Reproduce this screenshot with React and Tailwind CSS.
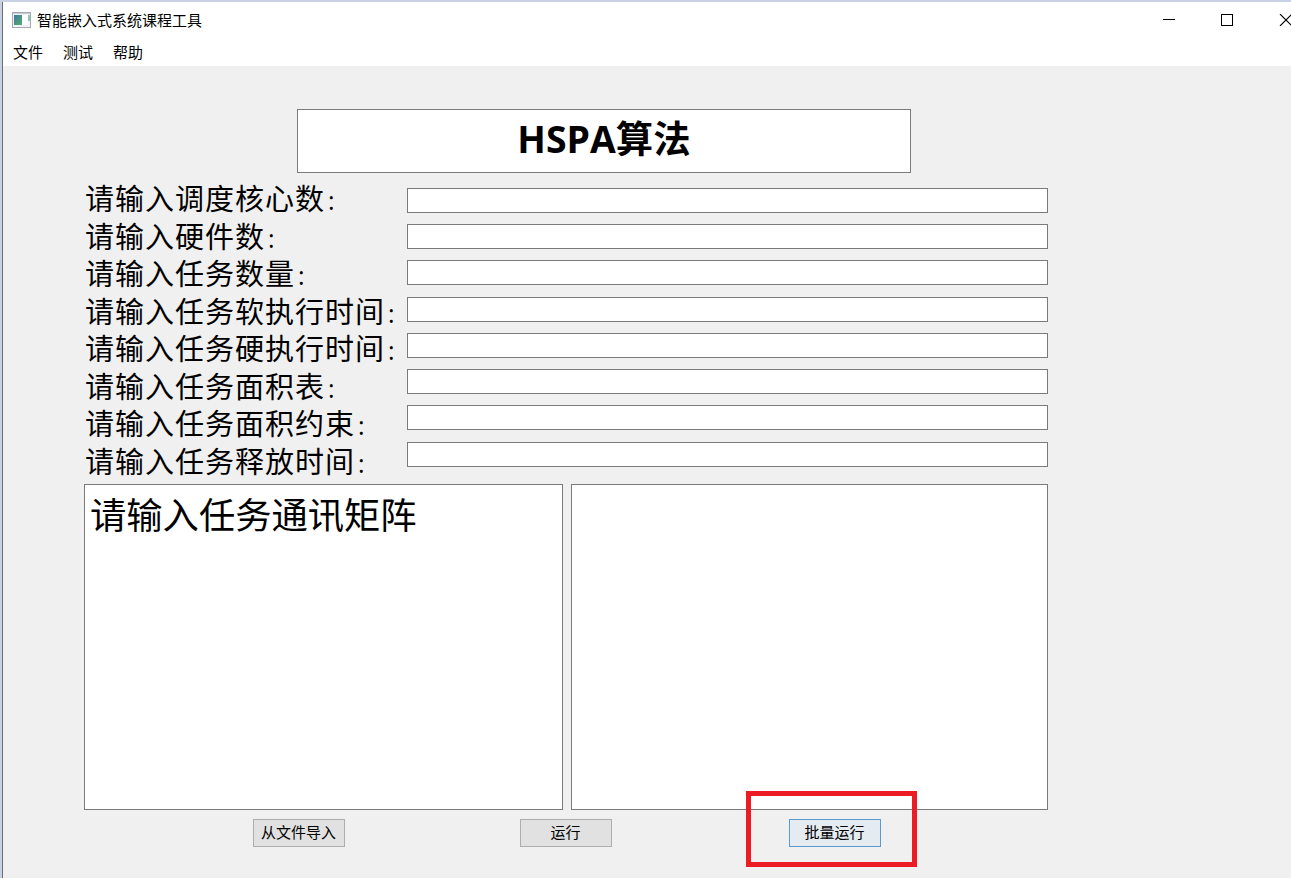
const FIELDS = [
  { label: "请输入调度核心数", gap: "mt-0" },
  { label: "请输入硬件数", gap: "mt-[11px]" },
  { label: "请输入任务数量", gap: "mt-[11px]" },
  { label: "请输入任务软执行时间", gap: "mt-[12px]" },
  { label: "请输入任务硬执行时间", gap: "mt-[11px]" },
  { label: "请输入任务面积表", gap: "mt-[11px]" },
  { label: "请输入任务面积约束", gap: "mt-[11px]" },
  { label: "请输入任务释放时间", gap: "mt-[12px]" },
];

function AppIcon() {
  return (
    <svg width="20" height="16" viewBox="0 0 20 16" className="shrink-0">
      <defs>
        <linearGradient id="pane" x1="0" y1="0" x2="1" y2="1">
          <stop offset="0" stopColor="#3f78a0" />
          <stop offset="1" stopColor="#55ad70" />
        </linearGradient>
      </defs>
      <rect x="0.5" y="0.5" width="18" height="15" fill="#f1f3f6" stroke="#a4a8b2" />
      <rect x="1" y="1" width="17" height="1" fill="#c6cad3" />
      <rect x="2" y="3" width="8" height="10" fill="url(#pane)" />
      <rect x="10" y="3" width="6" height="10" fill="#ffffff" />
      <rect x="16" y="3" width="2" height="6" fill="#8cc8b0" />
    </svg>
  );
}

function TitleBar() {
  return (
    <header className="flex h-[36px] items-start bg-white">
      <div className="flex pt-[10px] pl-[9px]">
        <AppIcon />
        <h1 className="ml-[5px] text-[15px] leading-[16px] whitespace-nowrap">智能嵌入式系统课程工具</h1>
      </div>
      <div className="ml-auto flex w-[128px] shrink-0 overflow-hidden pt-[12px]">
        <svg width="128" height="12" viewBox="0 0 128 12" shapeRendering="crispEdges">
          <rect x="0" y="5" width="12" height="1" />
          <rect x="58.5" y="0.5" width="11" height="11" fill="none" stroke="#000" />
          <path d="M117 0 l12 12 M129 0 l-12 12" stroke="#000" strokeWidth="1.1" fill="none" shapeRendering="auto" />
        </svg>
      </div>
    </header>
  );
}

function PushButton({ children, className }) {
  return (
    <button className={`h-[28px] w-[92px] border pr-px text-center text-[15px] leading-[24px] ${className}`}>
      <span className="block h-[26px] whitespace-nowrap">{children}</span>
    </button>
  );
}

export default function App() {
  return (
    <div className="h-[878px] w-[1291px] overflow-hidden border-t-2 border-l-2 border-[#c7d1e4] bg-[#f0f0f0] font-['Open_Sans','Noto_Sans_CJK_SC',sans-serif] text-black">
      <div className="h-full border-l border-[#6b6e75]">
        <TitleBar />
        <nav className="flex h-[28px] gap-[20px] bg-white pl-[10px] text-[15px] leading-[28px]">
          <span>文件</span>
          <span>测试</span>
          <span>帮助</span>
        </nav>
        <main className="flex flex-col pt-[43px]">
          <div className="ml-[294px] h-[64px] w-[614px] border border-[#7a7a7a] bg-white text-center text-[37.4px] leading-[57px] font-bold">
            HSPA算法
          </div>
          <section className="mt-[8px] ml-[81px] flex h-[303px]">
            <div className="-mt-px w-[323px] pl-px text-[29px] leading-[37.5px] tracking-[1px] whitespace-nowrap">
              {FIELDS.map((f) => (
                <div key={f.label} className="h-[37.5px]">
                  {f.label}
                  <span className="ml-[3px] text-[25px] leading-none">:</span>
                </div>
              ))}
            </div>
            <div className="flex flex-col pt-[7px]">
              {FIELDS.map((f) => (
                <div key={f.label} className={`h-[25px] w-[641px] border border-[#7a7a7a] bg-white ${f.gap}`} />
              ))}
            </div>
          </section>
          <section className="ml-[81px] flex gap-[8px]">
            <div className="h-[326px] w-[479px] border border-[#7a7a7a] bg-white pl-[5px] text-[36.3px] leading-[60px]">
              请输入任务通讯矩阵
            </div>
            <div className="h-[326px] w-[477px] border border-[#7a7a7a] bg-white" />
          </section>
          <div className="mt-[9px] ml-[250px] flex">
            <PushButton className="border-[#adadad] bg-[#e1e1e1]">从文件导入</PushButton>
            <PushButton className="ml-[175px] border-[#adadad] bg-[#e1e1e1]">运行</PushButton>
            <div className="relative ml-[177px]">
              <PushButton className="border-[#5a9bcf] bg-[#e4ebf1]">批量运行</PushButton>
              <div className="pointer-events-none absolute -top-[28px] -left-[43px] h-[76px] w-[171px] border-5 border-[#ed1c24]" />
            </div>
          </div>
        </main>
      </div>
    </div>
  );
}
